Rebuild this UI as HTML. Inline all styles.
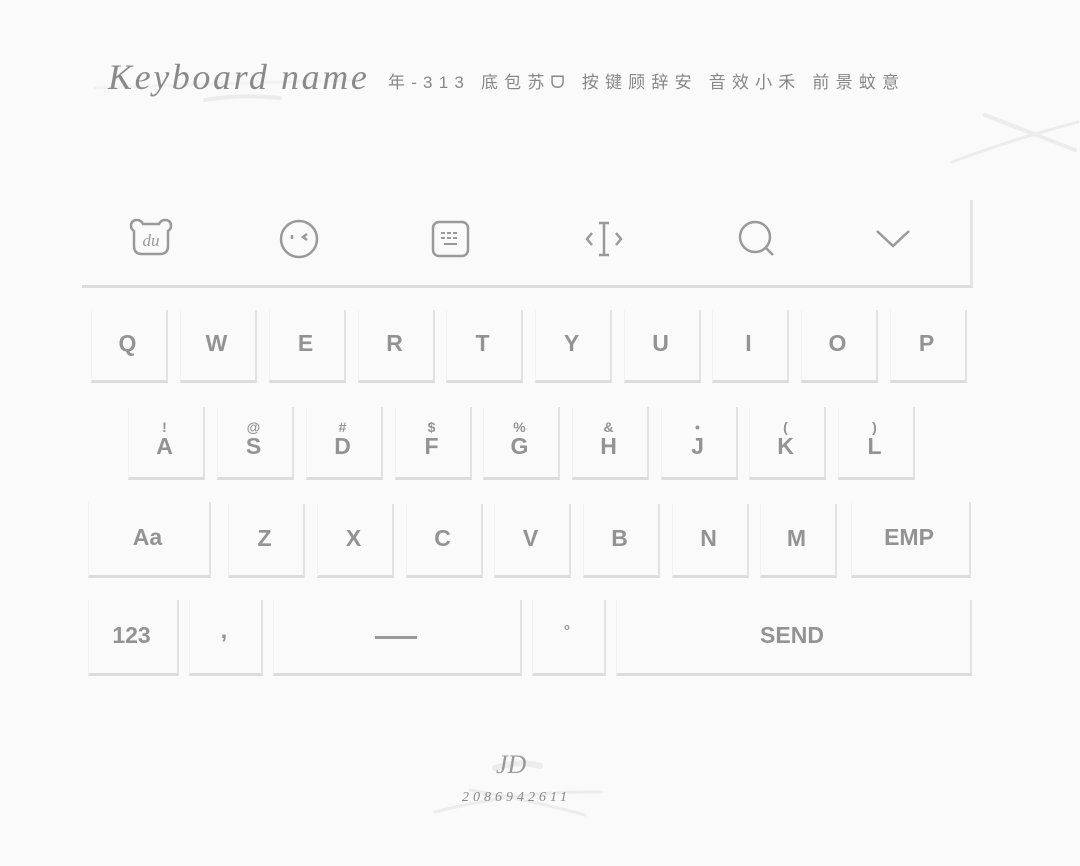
<!DOCTYPE html>
<html><head><meta charset="utf-8">
<style>
html,body{margin:0;padding:0;}
body{width:1080px;height:866px;background:#fafafa;position:relative;overflow:hidden;font-family:"Liberation Sans","Noto Sans CJK SC",sans-serif;}
.k{position:absolute;box-sizing:border-box;border-right:2px solid #e2e2e2;border-bottom:3px solid #dcdcdc;border-left:1px solid #f2f2f2;display:flex;align-items:center;justify-content:center;color:#939393;font-weight:bold;font-size:23px;padding-right:3px;padding-bottom:3px;}
.k .s{position:absolute;top:12px;left:0;right:3px;text-align:center;font-size:14px;}
.k .m{margin-top:12px;}
.tb{position:absolute;left:82px;top:200px;width:891px;height:88px;box-sizing:border-box;border-right:3px solid #e4e4e4;border-bottom:3px solid #dcdcdc;}
.ic{position:absolute;}
</style></head><body>
<svg style="position:absolute;left:0;top:0" width="1080" height="866">
 <g stroke="#ececec" stroke-linecap="round" fill="none">
  <path d="M95 88 Q200 84 360 80" stroke-width="3" opacity=".6"/>
  <path d="M205 100 Q240 94 280 98" stroke-width="4"/>
  <path d="M985 115 L1075 150" stroke-width="4"/>
  <path d="M952 162 Q1010 140 1078 122" stroke-width="3"/>
  <path d="M495 768 Q520 760 540 766" stroke-width="6"/>
  <path d="M435 812 Q520 790 602 792" stroke-width="3"/>
  <path d="M470 790 Q530 800 585 815" stroke-width="3"/>
 </g>
</svg>
<div style="position:absolute;left:108px;top:56px;font-family:'Liberation Serif',serif;font-style:italic;font-size:36px;color:#8a8a8a;letter-spacing:2.6px;white-space:nowrap;">Keyboard name</div>
<div style="position:absolute;left:388px;top:68px;font-size:17px;color:#888;letter-spacing:6.2px;white-space:nowrap;">年-313 底包苏ᗜ 按键顾辞安 音效小禾 前景蚊意</div>

<div class="tb"></div>
<svg class="ic" style="left:128px;top:216px" width="46" height="42" viewBox="0 0 46 42" fill="none" stroke="#999" stroke-width="2.5">
 <path d="M9 4 Q3 4 3 10 Q3 13 6 15 L6 30 Q6 38 14 38 L32 38 Q40 38 40 30 L40 15 Q43 13 43 10 Q43 4 37 4 Q33 4 31 8 L15 8 Q13 4 9 4Z"/>
 <text x="23" y="30" text-anchor="middle" font-family="Liberation Serif,serif" font-style="italic" font-size="17" fill="#999" stroke="none">du</text>
</svg>
<svg class="ic" style="left:278px;top:218px" width="42" height="42" fill="none" stroke="#999" stroke-width="2.5">
 <circle cx="21" cy="21" r="18"/><path d="M14 17 L14 21"/><path d="M29 16 L25 19 L29 22"/>
</svg>
<svg class="ic" style="left:431px;top:219px" width="40" height="40" fill="none" stroke="#999" stroke-width="2.5">
 <rect x="2" y="3" width="35" height="34" rx="6"/>
 <path d="M10 14h4M16 14h4M22 14h4M10 19h4M16 19h4M22 19h4M13 25h13" stroke-width="2"/>
</svg>
<svg class="ic" style="left:582px;top:220px" width="44" height="38" fill="none" stroke="#999" stroke-width="2.5">
 <path d="M10 13 L5 19 L10 25"/><path d="M34 13 L39 19 L34 25"/><path d="M22 3 L22 35 M17 3 L27 3 M17 35 L27 35"/>
</svg>
<svg class="ic" style="left:736px;top:218px" width="42" height="42" fill="none" stroke="#999" stroke-width="2.5">
 <circle cx="19" cy="19" r="15"/><path d="M30 30 L37 37"/>
</svg>
<svg class="ic" style="left:874px;top:225px" width="38" height="26" fill="none" stroke="#999" stroke-width="2.5">
 <path d="M3 6 L19 21 L35 6"/>
</svg>

<!-- row1 -->
<div class="k" style="left:91px;top:310px;width:77px;height:73px">Q</div>
<div class="k" style="left:180px;top:310px;width:77px;height:73px">W</div>
<div class="k" style="left:269px;top:310px;width:77px;height:73px">E</div>
<div class="k" style="left:358px;top:310px;width:77px;height:73px">R</div>
<div class="k" style="left:446px;top:310px;width:77px;height:73px">T</div>
<div class="k" style="left:535px;top:310px;width:77px;height:73px">Y</div>
<div class="k" style="left:624px;top:310px;width:77px;height:73px">U</div>
<div class="k" style="left:712px;top:310px;width:77px;height:73px">I</div>
<div class="k" style="left:801px;top:310px;width:77px;height:73px">O</div>
<div class="k" style="left:890px;top:310px;width:77px;height:73px">P</div>
<!-- row2 -->
<div class="k" style="left:128px;top:407px;width:77px;height:73px"><span class="s">!</span><span class="m">A</span></div>
<div class="k" style="left:217px;top:407px;width:77px;height:73px"><span class="s">@</span><span class="m">S</span></div>
<div class="k" style="left:306px;top:407px;width:77px;height:73px"><span class="s">#</span><span class="m">D</span></div>
<div class="k" style="left:395px;top:407px;width:77px;height:73px"><span class="s">$</span><span class="m">F</span></div>
<div class="k" style="left:483px;top:407px;width:77px;height:73px"><span class="s">%</span><span class="m">G</span></div>
<div class="k" style="left:572px;top:407px;width:77px;height:73px"><span class="s">&amp;</span><span class="m">H</span></div>
<div class="k" style="left:661px;top:407px;width:77px;height:73px"><span class="s">•</span><span class="m">J</span></div>
<div class="k" style="left:749px;top:407px;width:77px;height:73px"><span class="s">(</span><span class="m">K</span></div>
<div class="k" style="left:838px;top:407px;width:77px;height:73px"><span class="s">)</span><span class="m">L</span></div>
<!-- row3 -->
<div class="k" style="left:88px;top:502px;width:123px;height:76px">Aa</div>
<div class="k" style="left:228px;top:504px;width:77px;height:74px">Z</div>
<div class="k" style="left:317px;top:504px;width:77px;height:74px">X</div>
<div class="k" style="left:406px;top:504px;width:77px;height:74px">C</div>
<div class="k" style="left:494px;top:504px;width:77px;height:74px">V</div>
<div class="k" style="left:583px;top:504px;width:77px;height:74px">B</div>
<div class="k" style="left:672px;top:504px;width:77px;height:74px">N</div>
<div class="k" style="left:760px;top:504px;width:77px;height:74px">M</div>
<div class="k" style="left:851px;top:502px;width:120px;height:76px">EMP</div>
<!-- row4 -->
<div class="k" style="left:88px;top:600px;width:91px;height:76px">123</div>
<div class="k" style="left:189px;top:600px;width:74px;height:76px"><span style="margin-top:-10px">,</span></div>
<div class="k" style="left:273px;top:600px;width:249px;height:76px"><span style="display:block;width:42px;height:3px;background:#999;margin-top:4px"></span></div>
<div class="k" style="left:532px;top:600px;width:74px;height:76px"><span style="font-size:16px;margin-top:-6px">°</span></div>
<div class="k" style="left:616px;top:600px;width:356px;height:76px">SEND</div>

<div style="position:absolute;left:496px;top:750px;font-family:'Liberation Serif',serif;font-style:italic;font-size:26px;color:#999;">JD</div>
<div style="position:absolute;left:462px;top:790px;font-family:'Liberation Serif',serif;font-style:italic;font-size:14px;color:#888;letter-spacing:4px;">2086942611</div>
</body></html>
